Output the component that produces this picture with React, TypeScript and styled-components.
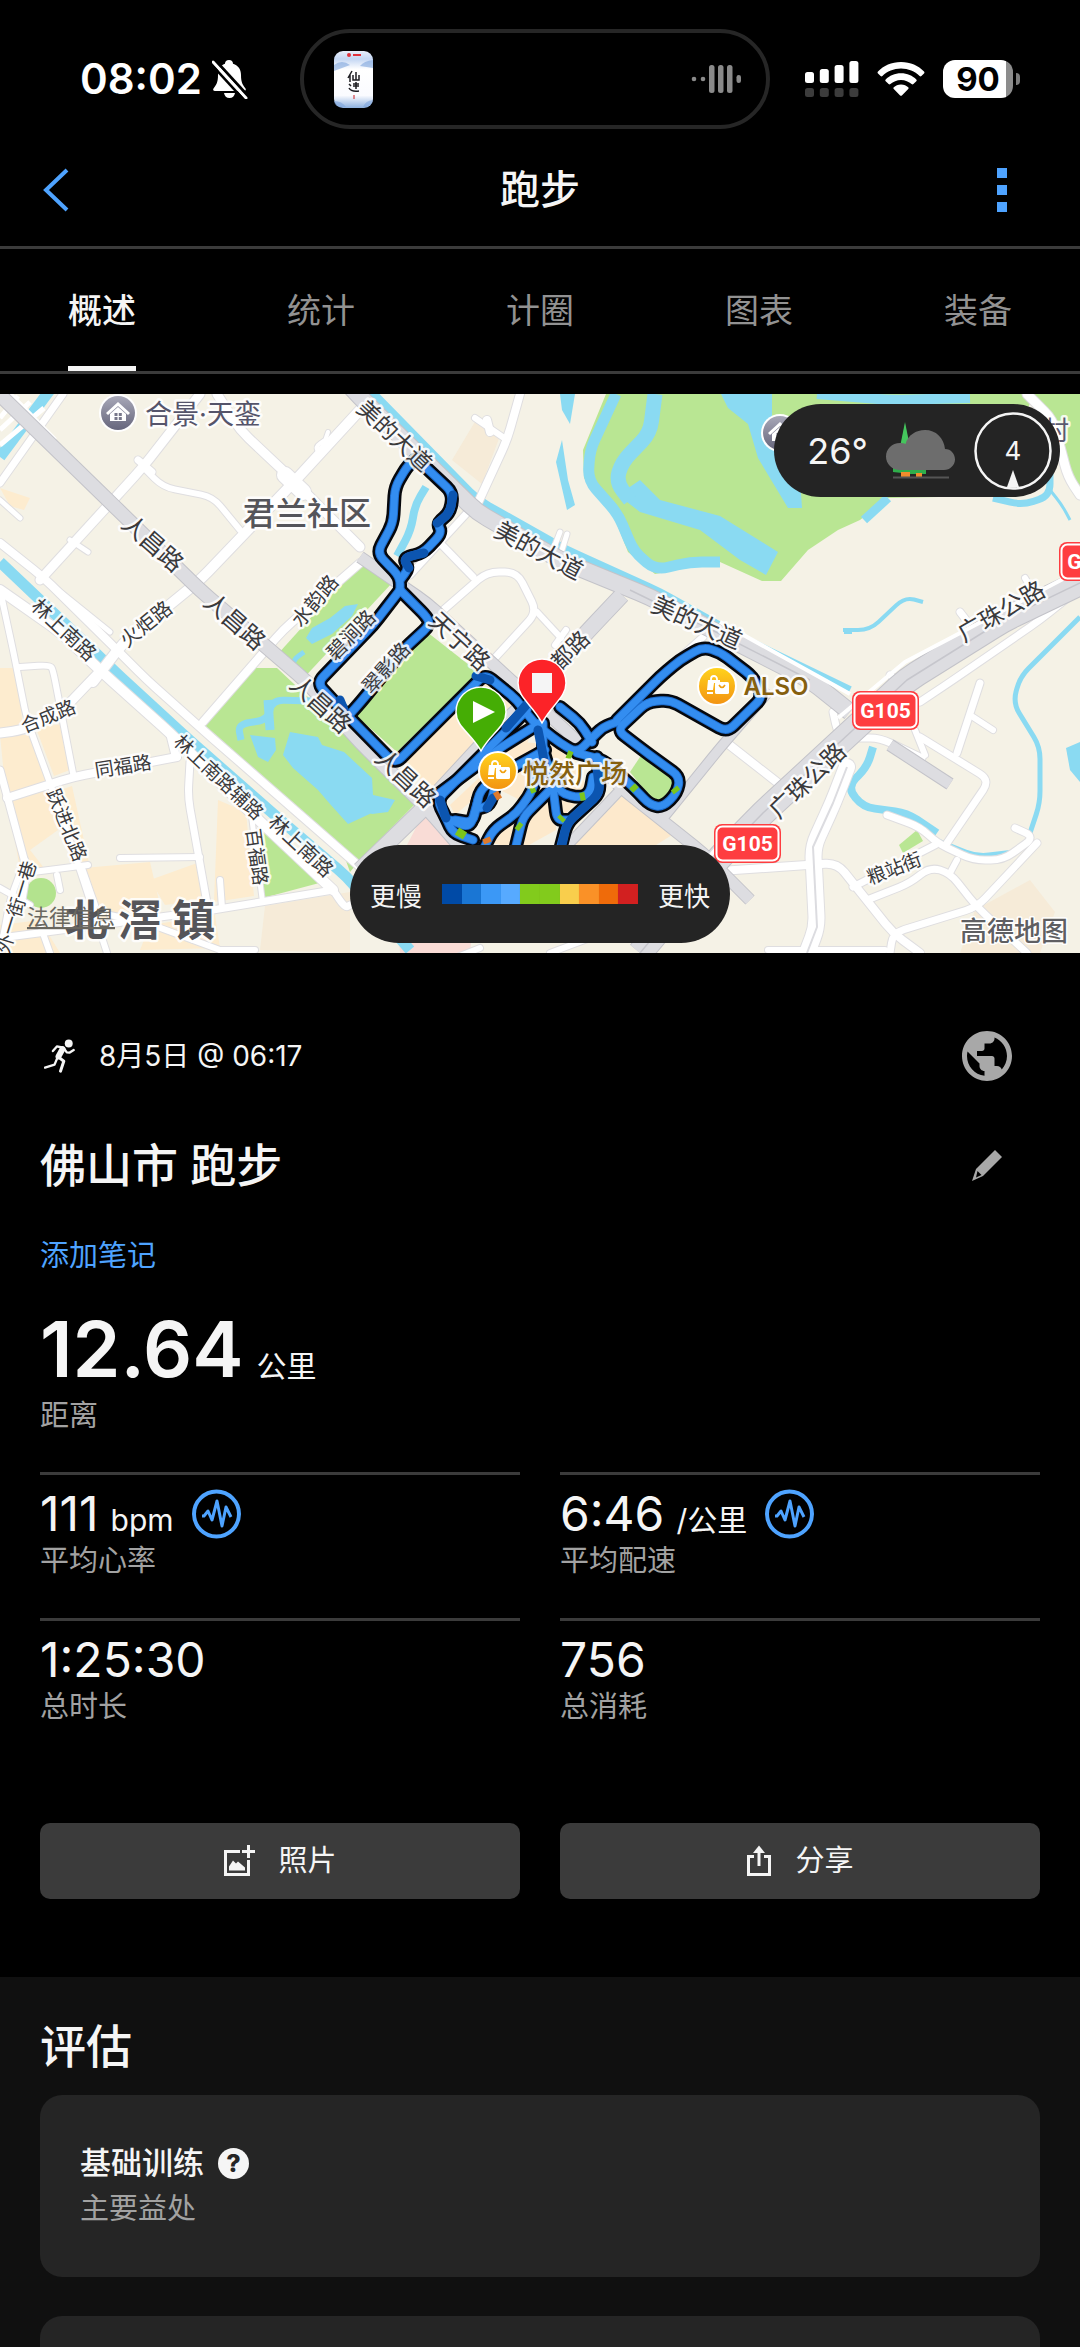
import React from "react";
import styled, { createGlobalStyle } from "styled-components";
import { MdPublic } from "react-icons/md";

const BLUE = "#4ea3ff";
const WHITE = "#f5f5f5";
const GREY = "#a2a2a2";
const LINE = "#3b3b3b";
const FONT = `Inter, "Noto Sans CJK SC", sans-serif`;

const GlobalStyle = createGlobalStyle`
  * { box-sizing: border-box; }
  body { margin: 0; background: #000; color: ${WHITE}; font-family: ${FONT}; }
  button { font-family: inherit; color: inherit; background: none; border: 0; padding: 0; margin: 0; cursor: pointer; }
  h1, h2, h3 { margin: 0; }
  svg { display: block; }
`;

const Page = styled.main`
  min-height: 100vh;
  display: flex;
  flex-direction: column;
  background: #000;
`;

/* ---------- status bar ---------- */

const StatusBar = styled.div`
  display: grid;
  grid-template-columns: 220px minmax(0, 470px) 1fr;
  align-items: center;
  padding: 29px 60px 0 80px;
`;

const Clock = styled.div`
  display: flex;
  align-items: center;
  gap: 10px;
  font-size: 42px;
  line-height: 50px;
  font-weight: 600;
  color: #fff;
`;

const Island = styled.div`
  display: flex;
  align-items: center;
  justify-content: space-between;
  height: 100px;
  padding: 0 24px 0 30px;
  border: 4px solid #262626;
  border-radius: 50px;
`;

const StatusIcons = styled.div`
  display: flex;
  align-items: center;
  justify-content: flex-end;
  gap: 18px;
`;

const Battery = styled.div`
  display: flex;
  align-items: center;
  gap: 3px;
`;

const BatteryBody = styled.div`
  width: 70px;
  height: 38px;
  border-radius: 12px;
  background: linear-gradient(90deg, #fff 90%, #8c8c8c 90%);
  color: #000;
  font-size: 33px;
  line-height: 38px;
  font-weight: 700;
  text-align: center;
`;

const BatteryNub = styled.div`
  width: 4px;
  height: 12px;
  border-radius: 0 6px 6px 0;
  background: #7c7c7c;
`;

/* ---------- header and tabs ---------- */

const Header = styled.header`
  display: grid;
  grid-template-columns: 1fr auto 1fr;
  align-items: center;
  height: 120px;
  padding: 4px 72px 0 42px;
  border-bottom: 3px solid ${LINE};
`;

const HeaderTitle = styled.h1`
  font-size: 40px;
  line-height: 60px;
  font-weight: 500;
  padding-left: 30px;
`;

const IconButton = styled.button<{ $end?: boolean }>`
  justify-self: ${(p) => (p.$end ? "end" : "start")};
  display: flex;
`;

const Tabs = styled.nav`
  display: flex;
  justify-content: space-between;
  padding: 0 68px;
  border-bottom: 3px solid ${LINE};
`;

const Tab = styled.button<{ $active?: boolean }>`
  height: 122px;
  font-size: 34px;
  line-height: 48px;
  padding-top: 7px;
  color: ${(p) => (p.$active ? WHITE : "#929292")};
  font-weight: ${(p) => (p.$active ? 500 : 400)};
  border-bottom: 5px solid ${(p) => (p.$active ? WHITE : "transparent")};
`;

/* ---------- map ---------- */

const MapPanel = styled.section`
  position: relative;
  margin-top: 20px;
  height: 559px;
  overflow: hidden;
  background: #f5f2e6;
`;

const Pill = styled.div`
  position: absolute;
  display: flex;
  align-items: center;
  background: #242424;
  color: ${WHITE};
`;

const WeatherPill = styled(Pill)`
  top: 10px;
  right: 20px;
  height: 93px;
  padding: 0 8px 0 33px;
  border-radius: 47px;
  gap: 18px;
  font-size: 36px;
`;

const Temperature = styled.span`
  flex: 0 0 58px;
`;

const LegendPill = styled(Pill)`
  left: 50%;
  bottom: 10px;
  transform: translateX(-50%);
  height: 98px;
  padding: 0 20px;
  border-radius: 49px;
  gap: 20px;
  font-size: 26px;
  white-space: nowrap;
`;

const Scale = styled.div`
  display: flex;
  width: 196px;
  height: 20px;
`;

const Swatch = styled.span<{ $c: string }>`
  flex: 1;
  background: ${(p) => p.$c};
`;

/* ---------- details ---------- */

const Details = styled.section`
  padding: 73px 40px 78px;
`;

const Row = styled.div<{ $h: number }>`
  display: flex;
  align-items: center;
  justify-content: space-between;
  height: ${(p) => p.$h}px;
  padding-right: 23px;
`;

const When = styled.div`
  display: flex;
  align-items: center;
  gap: 24px;
  padding-left: 4px;
  font-size: 28px;
  line-height: 44px;
`;

const ActivityTitle = styled.h2`
  font-size: 46px;
  line-height: 70px;
  font-weight: 500;
`;

const TitleRow = styled(Row)`
  margin-top: 44px;
  padding-right: 38px;
`;

const NoteButton = styled.button`
  display: block;
  margin-top: 34px;
  font-size: 29px;
  line-height: 44px;
  color: ${BLUE};
`;

const Distance = styled.div`
  display: flex;
  align-items: baseline;
  gap: 13px;
  height: 90px;
  margin-top: 26px;
  line-height: 90px;
`;

const DistanceValue = styled.span`
  font-size: 77px;
  font-weight: 600;
`;

const Unit = styled.span`
  font-size: 30px;
`;

const Label = styled.div`
  font-size: 29px;
  line-height: 44px;
  color: ${GREY};
`;

const Grid = styled.div`
  display: grid;
  grid-template-columns: 1fr 1fr;
  column-gap: 40px;
`;

const StatGrid = styled(Grid)`
  margin-top: 34px;
`;

const Stat = styled.div`
  border-top: 3px solid ${LINE};
  padding: 14px 0 35px;
`;

const StatValue = styled.div`
  display: flex;
  align-items: center;
  gap: 18px;
  height: 50px;
`;

const StatText = styled.div`
  display: flex;
  align-items: baseline;
  gap: 12px;
  height: 50px;
  font-size: 48px;
  line-height: 50px;
`;

const Actions = styled(Grid)`
  margin-top: 59px;
`;

const ActionButton = styled.button`
  display: flex;
  align-items: center;
  justify-content: center;
  gap: 23px;
  height: 76px;
  border-radius: 10px;
  background: #3b3b3b;
  font-size: 29px;
  line-height: 44px;
`;

/* ---------- evaluation ---------- */

const Evaluation = styled.section`
  flex: 1;
  display: flex;
  flex-direction: column;
  padding: 39px 40px 0;
  background: #101010;
`;

const SectionTitle = styled.h2`
  font-size: 46px;
  line-height: 60px;
  font-weight: 500;
  margin-bottom: 19px;
`;

const Card = styled.article`
  padding: 44px 40px 46px;
  border-radius: 22px;
  background: #252525;
`;

const NextCard = styled.article`
  flex: 1;
  min-height: 24px;
  margin-top: 39px;
  border-radius: 22px 22px 0 0;
  background: #252525;
`;

const CardTitle = styled.h3`
  display: flex;
  align-items: center;
  gap: 14px;
  font-size: 31px;
  line-height: 48px;
  font-weight: 500;
`;

const Help = styled.button`
  width: 31px;
  height: 31px;
  border-radius: 50%;
  background: ${WHITE};
  color: #252525;
  font-size: 25px;
  line-height: 31px;
  font-weight: 800;
`;

/* ---------- icons ---------- */

const BellOff = () => (
  <svg width="36" height="40" viewBox="0 0 36 40">
    <path
      fill="#fff"
      d="M17 1c2.600 0 4 1.700 4 3.800 5.500 1.700 8 6 8 11.200 0 8 2 10 4.500 13.500.8 1.500 0 2.500-1.500 2.500H3c-1.600 0-2.400-1.200-1.500-2.500C4 26 6 24 6 16 6 10.800 8 6.500 13 4.800 13 2.700 14.400 1 17 1zM12 34h11c-.5 3-2.500 5-5.500 5S12.500 37 12 34z"
    />
    <path d="M3 1l33 36" stroke="#000" strokeWidth="3" />
    <path d="M1 3l33 36" stroke="#fff" strokeWidth="3" strokeLinecap="round" />
    <path d="M-1 5l33 36" stroke="#000" strokeWidth="2.500" />
  </svg>
);

const AlbumArt = () => (
  <svg width="39" height="57" viewBox="0 0 39 57">
    <defs>
      <linearGradient id="art" x1="0" y1="0" x2="0" y2="1">
        <stop offset="0" stopColor="#e8eefa" />
        <stop offset=".14" stopColor="#c3d6f3" />
        <stop offset=".32" stopColor="#ffffff" />
        <stop offset=".78" stopColor="#fafbff" />
        <stop offset="1" stopColor="#8eb1df" />
      </linearGradient>
    </defs>
    <rect width="39" height="57" rx="9" fill="url(#art)" />
    <path d="M0 14q8-6 16 0l-16 6zM39 9q-9 1-13 6l13 2zM0 50q8 0 12 6H7q-6 0-7-6zM39 49q-8 1-10 7h3q6-1 7-7z" fill="#7fa5dc" opacity=".6" />
    <circle cx="15" cy="4" r="2" fill="#e0313b" />
    <path d="M19 4h8" stroke="#e0313b" strokeWidth="2" />
    <path
      d="M18 20l-4 7M16 24v7M19 24v5h6v-5M22 21v8M15 33l2 2M19 33h6M22 31v7M19 35h6M15 37q2 4 10 3"
      stroke="#1d1d22"
      strokeWidth="1.500"
      fill="none"
    />
    <path d="M20 44v4" stroke="#d8636b" strokeWidth="1.500" />
  </svg>
);

const WaveForm = () => (
  <svg width="51" height="30" viewBox="0 0 51 30" fill="#8a8a8a">
    <circle cx="3" cy="15" r="2.300" />
    <circle cx="12" cy="15" r="2.300" />
    <rect x="18" y="1" width="5.500" height="28" rx="2.500" />
    <rect x="27" y="1" width="5.500" height="28" rx="2.500" />
    <rect x="36" y="1" width="5.500" height="28" rx="2.500" />
    <rect x="45.500" y="11" width="4.500" height="8" rx="2.200" />
  </svg>
);

const Signal = () => (
  <svg width="54" height="38" viewBox="0 0 54 38">
    {[12, 9, 5, 1].map((y, i) => (
      <g key={i}>
        <rect x={i * 14.8} y={y} width="9" height={23 - y} rx="2.500" fill="#fff" />
        <rect x={i * 14.8} y="28" width="9" height="9" rx="2.500" fill="#3c3c3c" />
      </g>
    ))}
  </svg>
);

const Wifi = () => (
  <svg width="48" height="36" viewBox="0 0 48 36" fill="#fff">
    <path d="M24 1C14.500 1 6.500 4.800 1 10.500c-.6.600-.6 1.300 0 1.900l2.600 2.600c.6.600 1.200.6 1.800 0C10.200 10.400 16.700 7.600 24 7.600s13.800 2.800 18.600 7.400c.6.600 1.200.6 1.800 0l2.600-2.600c.6-.6.600-1.300 0-1.900C41.500 4.800 33.500 1 24 1z" />
    <path d="M24 12.200c-6.200 0-11.600 2.400-15.300 6.200-.6.600-.6 1.200 0 1.800l2.900 2.900c.6.600 1.200.6 1.800 0 2.700-2.600 6.500-4.200 10.600-4.200s7.900 1.600 10.600 4.200c.6.600 1.200.6 1.800 0l2.900-2.900c.6-.6.600-1.200 0-1.800-3.700-3.800-9.100-6.200-15.300-6.200z" />
    <path d="M24 23.500c-3 0-5.500 1.100-7.200 2.800-.6.600-.6 1.200 0 1.800l6.300 6.300c.6.600 1.200.6 1.800 0l6.300-6.300c.6-.6.600-1.200 0-1.800-1.700-1.700-4.200-2.800-7.200-2.800z" />
  </svg>
);

const Runner = () => (
  <svg width="31" height="34" viewBox="42 28 94 102" fill="none" stroke={WHITE} strokeLinecap="round" strokeLinejoin="round">
    <circle cx="117" cy="41" r="12" fill={WHITE} stroke="none" />
    <path d="M69 64l12-14 20 4 10 14 8 1 13-8" strokeWidth="7" />
    <path d="M98 58L86 80" strokeWidth="18" />
    <path d="M88 84l14 11-10 30" strokeWidth="9" />
    <path d="M82 86l-8 19-29 9" strokeWidth="7" />
  </svg>
);

const Pencil = () => (
  <svg width="30" height="31" viewBox="0 0 30 31">
    <path d="M23 0l7 7-19 19L0 31l4-12z" fill="#a8a8a8" />
    <path d="M5.500 21l4 4-5.500 2.500z" fill="#000" />
  </svg>
);

const Pulse = () => (
  <svg width="49" height="50" viewBox="0 0 49 50" fill="none" stroke={BLUE}>
    <circle cx="24.500" cy="25" r="22.500" strokeWidth="4" />
    <path d="M10 27h2l4-5 4 9 5-19 5 25 4-19 5 10" strokeWidth="3" strokeLinejoin="round" />
  </svg>
);

const PhotoAdd = () => (
  <svg width="32" height="32" viewBox="0 0 32 32" fill="none" stroke={WHITE} strokeWidth="3">
    <path d="M17 6.500H2.500v23h23V15" />
    <path d="M25.500 0v13M19 6.500h13" />
    <path d="M6 25.500v-4l4-6 3 3 2-2 7 6v3z" fill={WHITE} stroke="none" />
  </svg>
);

const ShareIcon = () => (
  <svg width="26" height="32" viewBox="0 0 26 32" fill="none" stroke={WHITE} strokeWidth="3">
    <path d="M8 11.500H2.500v18h21v-18H18" />
    <path d="M13 21V4" />
    <path d="M7 8l6-7.500L19 8z" fill={WHITE} stroke="none" />
  </svg>
);

const Cloud = () => (
  <svg width="70" height="57" viewBox="0 0 70 57">
    <path d="M19 0l6 30H13z" fill="#45c65d" />
    <path d="M7 46h33v6H24l-8-1-9-1z" fill="#2fae4b" />
    <path d="M15 50h9v5h-9zM30 51h6v4h-6z" fill="#f18c2c" />
    <path d="M14 48C6 48 0 42 0 34.500S6 21 14 21c2 0 4 .3 5.500 1C22 13 30 8 39 8c11 0 19 8 20 19 6 0 10 5 10 10.500S64 48 58 48z" fill="#6d6d6d" />
    <path d="M7 55.500h56" stroke="#555" strokeWidth="2" />
  </svg>
);

const Wind = () => (
  <svg width="78" height="78" viewBox="0 0 78 78">
    <circle cx="39" cy="39" r="37.500" fill="none" stroke={WHITE} strokeWidth="2.500" />
    <path d="M39 58l6 17q-6 1.500-12 0z" fill={WHITE} />
    <text x="39" y="48" textAnchor="middle" fontSize="26" fontFamily="Inter, sans-serif" fill={WHITE}>4</text>
  </svg>
);

/* ---------- map data ---------- */

type Line = [points: string, width: number];

const WARM = [
  "0,668 17,668 23,728 0,732", "0,735 30,735 46,782 6,796", "36,728 62,724 70,770 54,776",
  "8,800 50,786 58,830 30,850 44,868 30,880 20,870", "60,790 72,786 90,868 78,868", "0,488 30,498 24,510 10,506",
  "84,868 150,862 160,905 100,920", "218,800 246,812 254,896 214,902", "150,925 215,915 220,948 140,950",
  "0,925 40,920 60,953 0,953", "150,880 200,862 204,900 165,905",
];
const PALE = ["476,420 500,436 482,484 452,460", "960,953 975,910 1030,880 1055,912 1040,953", "265,906 350,892 350,953 260,950"];
const BLOCKS = ["486,676 512,704 434,792 400,760", "560,860 626,792 680,830 648,850 610,900", "535,725 520,760 455,815 450,805", "530,790 556,800 556,830 520,850 480,840", "495,740 560,745 590,790 560,820 500,790"];
const PARK = [
  "360,563 392,583 300,682 277,655", "427,632 478,672 397,752 352,712",
  "250,668 277,668 360,746 417,802 360,860 350,872 345,858 203,728",
  "263,822 323,882 263,898", "640,757 650,757 680,777 668,806 655,803 630,772", "917,830 923,841 903,853 899,845",
  "606,394 583,450 584,478 613,514 628,552 655,574 720,562 762,581 781,581 808,550 838,530 860,520 888,498 990,496 1034,394",
  "1034,394 1080,394 1080,500 1066,470 1050,420",
];
const LAKES = [
  "290,732 318,737 322,745 344,752 372,778 374,812 348,824 330,804 318,790 293,768 283,755",
  "250,735 275,738 276,750 268,762 258,757", "360,792 395,800 388,812 372,814 360,808",
  "720,392 772,394 772,440 800,478 802,508 788,508 758,458 748,424 728,408",
  "640,480 660,500 720,516 778,552 766,575 740,560 700,530 640,512 618,495",
  "560,394 575,394 570,424 562,410", "562,440 568,480 575,505 567,510 556,462",
  "1066,748 1080,742 1080,782 1070,770", "306,638 312,628 330,618 345,606 358,604 352,616 332,634 312,644",
];
const WATER: Line[] = [
  ["50,390 0,457", 11], ["0,562 100,657 113,670 187,738 277,817 347,877 410,950", 11],
  ["370,390 478,500 567,550 660,592 738,636 850,690", 8],
  ["616,394 590,450 588,480 618,514 634,552 656,570 690,562 720,562", 11], ["655,394 650,433 622,462 616,482 630,500", 15],
  ["817,394 890,400 970,398", 10], ["888,498 864,520", 9], ["993,498 1022,505 1050,496 1050,470", 7], ["1050,490 1062,505 1070,520", 3],
  ["843,630 870,630 905,597 923,602", 4], ["848,628 848,634", 8], ["1080,617 1020,677 1013,703 1040,747 1040,803 1030,833", 5],
  ["873,747 867,767 847,787 863,807 907,813 937,833", 8], ["937,840 977,856 1010,852", 4],
  ["241,740 238,724 268,720 272,700 312,701", 7], ["268,700 270,730", 9], ["304,652 293,660 292,675", 5], ["426,487 415,505 411,530 397,556", 8],
];
const MINOR: Line[] = [
  ["200,394 143,467 113,500 40,580", 9], ["143,467 163,487 213,497 240,530", 6], ["138,460 152,472", 7],
  ["217,394 240,430 293,480 360,547", 9], ["360,410 293,483 200,580 123,643 93,682", 10],
  ["285,475 303,492", 16], ["63,394 0,483", 7], ["0,500 20,518", 5], ["360,563 283,630 203,722", 8],
  ["48,582 110,632", 5], ["70,540 88,552", 5], ["325,440 315,447 320,455 328,432", 4],
  ["0,543 43,577 107,640 147,680 203,730 360,867", 8], ["0,590 60,632 103,673 170,733 250,812 333,890", 10],
  ["0,590 13,650 27,720 50,783 80,870 107,953", 6], ["20,667 50,665 53,670 73,773", 6],
  ["0,733 23,730 60,713 103,668", 9], ["7,798 73,777 177,757", 8], ["0,770 27,870 22,900", 7],
  ["170,733 176,757", 8], ["190,762 188,797 207,903", 7], ["120,858 200,857", 6], ["33,872 88,865", 6],
  ["57,875 60,890", 6], ["82,868 95,905", 6], ["0,938 100,925 213,910 333,890", 7], ["110,915 147,923 220,950", 6],
  ["40,925 50,953", 6], ["0,888 30,905", 6], ["220,880 222,908", 6], ["252,820 262,898", 5], ["333,890 345,908 350,905", 7],
  ["220,950 255,950", 6], ["0,953 10,900 25,860", 6],
  ["520,394 507,440 477,505", 8], ["507,440 475,418", 6], ["487,420 490,432", 8], ["467,513 410,575", 7],
  ["440,543 473,577", 7], ["440,613 487,572 517,572 537,612 493,660", 7], ["537,612 561,638", 6], ["555,645 566,630", 6],
  ["555,545 560,532", 5], ["562,550 567,534", 5], ["703,637 675,662", 7],
  ["1027,394 1053,420 1068,477 1080,495", 9], ["1080,588 1040,620 953,680 920,702", 7],
  ["960,612 970,625", 7], ["1025,578 1032,590", 6], ["890,675 900,684", 7],
  ["727,743 787,790", 8], ["847,767 833,803 813,847 817,927 807,953", 16],
  ["720,871 837,863 893,933 920,953", 8], ["860,738 880,738 922,758", 7], ["833,712 838,735 850,738", 7],
  ["915,730 925,755", 6], ["920,737 990,780 947,843", 7], ["980,683 957,753", 7], ["973,717 993,730", 6],
  ["887,815 920,827 937,843 973,860 1003,860 1035,837 1015,828", 7], ["1037,843 977,907 893,933 890,953", 7],
  ["867,900 910,883 930,867 950,873 977,907 1027,953", 7], ["853,887 935,845", 7], ["957,860 950,873", 6],
  ["550,953 590,938", 6], ["450,960 480,948", 6], ["768,950 885,950", 6],
];
const MAJOR: Line[] = [
  ["0,395 110,502 200,590 307,682 360,742 427,808 490,880", 13], ["340,375 360,397 477,512 560,560 650,597 720,634 810,680 850,712", 16],
  ["1080,583 1003,620 907,680 853,730 763,813 720,857 640,953", 24], ["360,557 427,603 503,673 573,737 620,787 703,853 750,900", 11],
  ["622,595 587,632 560,662 540,690 487,740 427,805 360,870", 15], ["563,850 623,787", 9], ["660,822 720,748 770,690", 9],
  ["890,745 950,784", 11],
];
const ROUTE = [
  "418,458 408,465 395,487 393,523 377,553 400,577 400,592",
  "418,460 453,493 450,513 437,523 442,533 423,553 403,558 409,568 400,580",
  "400,590 373,625 317,683 340,708 395,764 485,674 517,700 533,722 560,743 577,753 592,738 603,727 617,722",
  "400,590 427,617 430,625 403,650 360,703 350,714",
  "560,707 580,723 592,742", "617,720 660,677 680,660 703,647 720,652 753,677 763,697 727,732 670,700 647,702 617,730 643,750 680,777 677,793 663,807 650,805 633,787 603,760 577,753",
  "527,710 437,800 447,820 453,833 473,840", "540,723 500,748 437,795", "545,750 500,775 480,790 473,823 455,820",
  "540,753 533,790 517,813 493,830 483,850", "560,780 523,817 515,850", "553,787 557,820 568,820",
  "543,723 543,753 560,793 580,798 590,793 593,777", "597,757 600,793 567,823 560,850",
  "500,768 490,805 480,808", "450,820 470,828 478,800",
];
const ROUTE_DARK = ["528,703 506,728", "453,495 450,513 437,523", "424,553 403,558 409,568", "597,768 600,793 567,823 562,845", "538,730 545,765 540,780", "440,800 446,818", "476,676 490,680", "493,798 487,808", "340,700 345,712"];
const ROUTE_MARKS: [string, string][] = [
  ["457,831 465,836", "#7cc51c"], ["632,786 636,790", "#7cc51c"], ["674,788 677,792", "#7cc51c"], ["517,825 521,828", "#7cc51c"],
  ["530,790 535,788", "#7cc51c"], ["495,797 500,794", "#e07b2c"], ["580,797 585,796", "#7cc51c"], ["567,754 572,756", "#7cc51c"],
  ["486,838 488,843", "#e07b2c"], ["560,820 563,817", "#7cc51c"],
];

type MapLabel = [text: string, x: number, y: number, angle: number, size: number, color?: string, weight?: number];
const LABELS: MapLabel[] = [
  ["人昌路", 153, 543, 41, 24], ["人昌路", 235, 621, 41, 24], ["火炬路", 146, 624, -39, 20], ["林上南路", 64, 630, 43, 20],
  ["水韵路", 315, 601, -50, 20], ["碧涧路", 351, 635, -46, 20], ["翠影路", 386, 668, -48, 20], ["美的大道", 395, 435, 43, 23],
  ["美的大道", 539, 550, 28, 24], ["美的大道", 697, 622, 24, 24], ["天宁路", 460, 641, 43, 24], ["都路", 570, 650, -45, 22],
  ["人昌路", 321, 704, 42, 24], ["人昌路", 406, 778, 43, 24], ["广珠公路", 1001, 611, -30, 24], ["广珠公路", 807, 780, -44, 24],
  ["粮站街", 894, 868, -21, 19], ["合成路", 48, 716, -22, 19], ["同福路", 123, 766, -9, 19], ["跃进北路", 67, 825, 68, 19],
  ["林上南路辅路", 219, 777, 43, 19], ["林上南路", 301, 846, 43, 20], ["百福路", 257, 857, 82, 19], ["外一街一巷", 16, 907, -73, 19],
  ["村", 1056, 430, 0, 26, "#5b5a70"], ["君兰社区", 307, 513, 0, 32, "#55555a", 500], ["合景·天銮", 203, 414, 0, 27, "#55546a"],
  ["悦然广场", 575, 773, 0, 26, "#86600f", 500], ["ALSO", 776, 686, 0, 24, "#86600f", 600], ["北 滘 镇", 140, 920, 0, 43, "#555559", 600],
];

/** Turns a list of points into a path whose corners are rounded by up to r. */
const rounded = (points: string, r: number) => {
  const p = points.split(" ").map((s) => s.split(",").map(Number));
  const toward = (a: number[], b: number[]) => {
    const d = Math.hypot(b[0] - a[0], b[1] - a[1]);
    const t = Math.min(r, d / 2) / d;
    return `${a[0] + (b[0] - a[0]) * t} ${a[1] + (b[1] - a[1]) * t}`;
  };
  let d = `M${p[0][0]} ${p[0][1]}`;
  for (let i = 1; i < p.length - 1; i++) {
    d += `L${toward(p[i], p[i - 1])}Q${p[i][0]} ${p[i][1]} ${toward(p[i], p[i + 1])}`;
  }
  const last = p[p.length - 1];
  return `${d}L${last[0]} ${last[1]}`;
};

const Shield = ({ x, y }: { x: number; y: number }) => (
  <g>
    <rect x={x} y={y} width="67" height="39" rx="8" fill="#fe3d40" />
    <rect x={x + 2.5} y={y + 2.5} width="62" height="34" rx="6" fill="none" stroke="#fff" strokeWidth="2" />
    <text x={x + 33.5} y={y + 27} textAnchor="middle" fontSize="21" fontWeight="700" fontFamily="Roboto, sans-serif" fill="#fff">G105</text>
  </g>
);

const House = ({ x, y }: { x: number; y: number }) => (
  <g transform={`translate(${x} ${y})`}>
    <circle r="19" fill="#fff" />
    <circle r="17" fill="url(#house)" />
    <path d="M-12 0L0-11 12 0l-2 2L0-7-10 2z" fill="#fff" />
    <path d="M-8 1l8-7 8 7v7H-8z" fill="#fff" />
    <path d="M-3.500 0h3v3h-3zM.8 0h3v3h-3zM-3.500 4h3v3h-3zM.8 4h3v3h-3z" fill="#77778a" />
  </g>
);

const Bag = ({ x, y }: { x: number; y: number }) => (
  <g transform={`translate(${x} ${y})`}>
    <circle r="20" fill="#fff" />
    <circle r="18" fill="url(#bag)" />
    <path d="M-9-6H3v3h-6l-1 7h-6zM-10 6h6v2h-6z" fill="#fff" />
    <path d="M-6-6v-1a3 3 0 0 1 6 0v1" fill="none" stroke="#fff" strokeWidth="1.800" />
    <rect x="-2" y="-4" width="14" height="12" rx="1.500" fill="#fff" />
    <path d="M2-1q3 5 6 0" fill="none" stroke="#f0a010" strokeWidth="1.600" />
  </g>
);

const lines = (list: Line[], color: string, extra: number) =>
  list.map(([points, width], i) => <path key={color + i} d={rounded(points, 12)} stroke={color} strokeWidth={width + extra} />);

const areas = (list: string[], color: string) => list.map((points, i) => <polygon key={color + i} points={points} fill={color} />);

const track = (list: string[], color: string, width: number) =>
  list.map((points, i) => <path key={color + i} d={rounded(points, 9)} stroke={color} strokeWidth={width} />);

const CityMap = () => (
  <svg width="100%" height="559" viewBox="0 394 1080 559" preserveAspectRatio="xMidYMid slice" role="img" aria-label="路线地图">
    <defs>
      <linearGradient id="house" x1="0" y1="0" x2="0" y2="1">
        <stop offset="0" stopColor="#a8a8b8" />
        <stop offset="1" stopColor="#66667c" />
      </linearGradient>
      <linearGradient id="bag" x1="0" y1="0" x2="0" y2="1">
        <stop offset="0" stopColor="#ffd21c" />
        <stop offset="1" stopColor="#f39412" />
      </linearGradient>
    </defs>
    <rect y="394" width="1080" height="559" fill="#f5f2e6" />
    {areas(WARM, "#fdeccf")}
    {areas(PALE, "#f6ebd8")}
    <polygon points="395,868 420,820 445,812 480,850 470,953 400,953" fill="#f9dcd6" />
    {areas(PARK, "#b9e693")}
    {areas(BLOCKS, "#fde9cc")}
    <circle cx="41" cy="893" r="15" fill="#b3e38e" />
    {areas(LAKES, "#8adaf2")}
    <g fill="none" strokeLinejoin="round">
      {lines(WATER, "#8adaf2", 0)}
      <g strokeLinecap="round">
        {lines(MINOR, "#dfdee0", 2)}
        {lines(MINOR, "#ffffff", 0)}
      </g>
      <path d="M847 767L833 803 813 847 817 927 807 953" stroke="#dcdce0" strokeWidth="2" />
      <path d="M0 430L30 402M0 445L44 408M0 418L18 396M10 394L55 440" stroke="#fff" strokeWidth="5" />
      {lines(MAJOR, "#c3c3c9", 2)}
      {lines(MAJOR, "#dddde1", 0)}
      <path d="M1080 583L1003 620 907 680 853 730 763 813 720 857 640 953M630 590L720 634 810 680" stroke="#c6c6cc" strokeWidth="1.500" />
      <path d="M720 622L850 694M735 826L690 880M1080 570L905 662 838 718" stroke="#fff" strokeWidth="4" />
      <g strokeLinecap="round">
        {track(ROUTE, "#06080d", 14)}
        {track(ROUTE, "#1c6bcc", 9)}
        {track(ROUTE, "#338df0", 7)}
        {track(ROUTE_DARK, "#0c55b0", 9)}
      </g>
      {ROUTE_MARKS.map(([p, c], i) => <polyline key={i} points={p} stroke={c} strokeWidth="8" />)}
    </g>
    <g fontFamily={`Inter, "Noto Sans CJK SC", sans-serif`} textAnchor="middle" paintOrder="stroke" stroke="#fff" strokeLinejoin="round">
      {LABELS.map(([text, x, y, angle, size, color = "#3a3a3c", weight = 400], i) => (
        <text
          key={i}
          x={x}
          y={y}
          dy={Math.round(size * 0.37)}
          fontSize={size}
          fontWeight={weight}
          fill={color}
          strokeWidth="5"
          strokeOpacity=".85"
          transform={`rotate(${angle} ${x} ${y})`}
        >
          {text}
        </text>
      ))}
      <a href="#legal">
        <text x="71" y="925" fontSize="22" fill="#6a675f" strokeWidth="0" textDecoration="underline">法律信息</text>
      </a>
      <text x="1014" y="941" fontSize="27" fontWeight="500" fill="#5f5f62" strokeWidth="3">高德地图</text>
    </g>
    <House x={118} y={413} />
    <House x={780} y={433} />
    <Shield x={852} y={691} />
    <Shield x={714} y={824} />
    <Shield x={1059} y={542} />
    <path d="M542 723C532 704 518 698 518 683a24 24 0 0 1 48 0c0 15-14 21-24 40z" fill="#fc2328" stroke="#fff" strokeWidth="1.500" />
    <rect x="532" y="673" width="20" height="20" fill="#f5f5f5" />
    <path d="M481 751C471 733 456 727 456 712a25 25 0 0 1 50 0c0 15-15 21-25 39z" fill="#45ad05" stroke="#fff" strokeWidth="1.500" />
    <path d="M473 701l22 11-22 11z" fill="#fff" />
    <Bag x={498} y={771} />
    <Bag x={717} y={686} />
  </svg>
);

/* ---------- page ---------- */

const TABS = ["概述", "统计", "计圈", "图表", "装备"];
const SCALE = ["#004aa6", "#1a76d4", "#3b98f6", "#57aaff", "#82cb1c", "#82cb1c", "#f9ce4c", "#fa9127", "#ef6b0a", "#d22020"];
const STATS = [
  { value: "111", unit: "bpm", label: "平均心率", pulse: true },
  { value: "6:46", unit: "/公里", label: "平均配速", pulse: true },
  { value: "1:25:30", label: "总时长" },
  { value: "756", label: "总消耗" },
];

export default function App() {
  return (
    <Page>
      <GlobalStyle />
      <StatusBar>
        <Clock>
          08:02
          <BellOff />
        </Clock>
        <Island>
          <AlbumArt />
          <WaveForm />
        </Island>
        <StatusIcons>
          <Signal />
          <Wifi />
          <Battery>
            <BatteryBody>90</BatteryBody>
            <BatteryNub />
          </Battery>
        </StatusIcons>
      </StatusBar>

      <Header>
        <IconButton aria-label="返回">
          <svg width="28" height="44" viewBox="0 0 28 44" fill="none" stroke={BLUE} strokeWidth="4">
            <path d="M25 2L4 22l21 20" />
          </svg>
        </IconButton>
        <HeaderTitle>跑步</HeaderTitle>
        <IconButton $end aria-label="更多">
          <svg width="12" height="46" viewBox="0 0 12 46" fill={BLUE}>
            <path d="M1 1h10v10H1zM1 18h10v10H1zM1 35h10v10H1z" />
          </svg>
        </IconButton>
      </Header>

      <Tabs>
        {TABS.map((t, i) => (
          <Tab key={t} $active={i === 0}>{t}</Tab>
        ))}
      </Tabs>

      <MapPanel>
        <CityMap />
        <WeatherPill>
          <Temperature>26°</Temperature>
          <Cloud />
          <Wind />
        </WeatherPill>
        <LegendPill>
          更慢
          <Scale>
            {SCALE.map((c, i) => (
              <Swatch key={i} $c={c} />
            ))}
          </Scale>
          更快
        </LegendPill>
      </MapPanel>

      <Details>
        <Row $h={60}>
          <When>
            <Runner />
            8月5日 @ 06:17
          </When>
          <IconButton aria-label="公开">
            <MdPublic size={60} color="#a8a8a8" />
          </IconButton>
        </Row>
        <TitleRow $h={70}>
          <ActivityTitle>佛山市 跑步</ActivityTitle>
          <IconButton aria-label="编辑">
            <Pencil />
          </IconButton>
        </TitleRow>
        <NoteButton>添加笔记</NoteButton>
        <Distance>
          <DistanceValue>12.64</DistanceValue>
          <Unit>公里</Unit>
        </Distance>
        <Label>距离</Label>
        <StatGrid>
          {STATS.map((s) => (
            <Stat key={s.label}>
              <StatValue>
                <StatText>
                  {s.value}
                  {s.unit && <Unit>{s.unit}</Unit>}
                </StatText>
                {s.pulse && <Pulse />}
              </StatValue>
              <Label>{s.label}</Label>
            </Stat>
          ))}
        </StatGrid>
        <Actions>
          <ActionButton>
            <PhotoAdd />
            照片
          </ActionButton>
          <ActionButton>
            <ShareIcon />
            分享
          </ActionButton>
        </Actions>
      </Details>

      <Evaluation>
        <SectionTitle>评估</SectionTitle>
        <Card>
          <CardTitle>
            基础训练
            <Help aria-label="说明">?</Help>
          </CardTitle>
          <Label>主要益处</Label>
        </Card>
        <NextCard />
      </Evaluation>
    </Page>
  );
}
